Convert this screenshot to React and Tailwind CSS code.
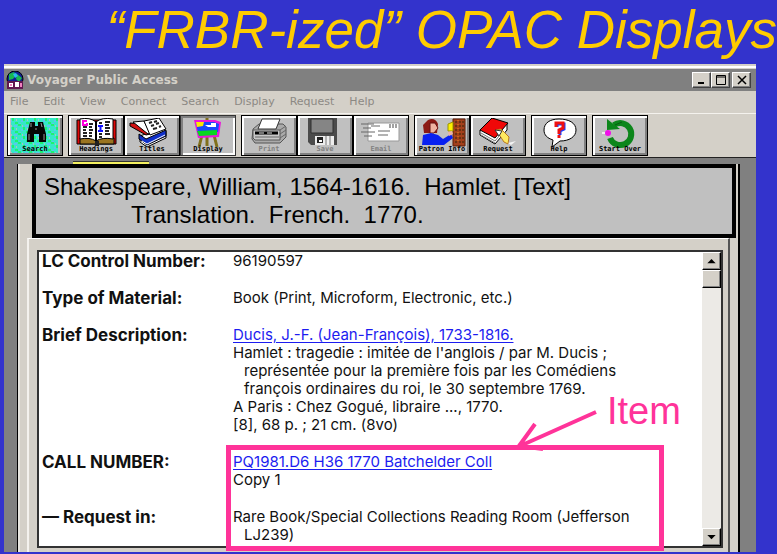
import React from "react";

const svgProps = { viewBox: "3 3 50 35", className: "block h-[35px] w-[50px]", "aria-hidden": true };

const SearchIcon = () => (
  <svg {...svgProps}>
    <defs>
      <pattern id="speckle" width="11" height="9" patternUnits="userSpaceOnUse">
        <rect width="11" height="9" fill="#35e8c8" />
        <path d="M0 0h3v2H0zM5 3h2v3H5zM8 7h3v2H8z" fill="#20f070" />
        <path d="M3 5h2v2H3zM7 1h3v2H7zM1 8h2v1H1z" fill="#5cc4f0" />
        <path d="M4 1h1v2H4zM9 4h1v2H9z" fill="#a8c8b8" />
      </pattern>
    </defs>
    <rect x="4" y="3" width="47" height="35" fill="url(#speckle)" />
    <path d="M23 7h5v4h3V7h5l3 12v8h-7v-8h-5v8h-7v-8z" fill="#050505" />
    <path d="M24 8v4M34 8l1 4M22 19v6M37 19v6M28 14h2" stroke="#999" strokeWidth="1" fill="none" />
  </svg>
);

const HeadingsIcon = () => (
  <svg {...svgProps}>
    <path d="M9 5h39v24H9z" fill="#e00808" stroke="#000" />
    <path d="M12 23h34v6H12z" fill="#9a7420" stroke="#000" />
    <path d="M12 4q10-2 16 3q6-5 17-3v20q-11-2-17 2q-6-4-16-2z" fill="#fff" stroke="#000" />
    <path d="M28 6v20" stroke="#000" strokeWidth="2" />
    <path d="M15 12h4M21 9h4M15 15h3M21 12h3M15 18h4M21 15h4M15 21h4M21 18h3M21 21h3M31 8h3M37 7h5M37 10h4M31 19h3M37 13h5M37 16h4M37 19h5M31 22h3" stroke="#222" strokeWidth="2" />
    <path d="M19 6h-4v4h4V8" stroke="#f0d" strokeWidth="2" fill="none" />
    <path d="M30 11h5M32.500 11v5M30 16h5" stroke="#11f" strokeWidth="2" />
    <path d="M27 26h4v5h-4z" fill="#222" />
  </svg>
);

const TitlesIcon = () => (
  <svg {...svgProps}>
    <path d="M16 21l22-8 4 3v7l-19 9-7-5z" fill="#fff" stroke="#000" />
    <path d="M15 19l7 5 20-9v6l-19 9-8-6z" fill="#1030c8" stroke="#000" />
    <path d="M18 26l5 3 18-9" stroke="#fff" fill="none" />
    <path d="M6 8l13 1 7 10-4 1L6 11z" fill="#d01010" stroke="#000" />
    <path d="M9 7l11-1 6 12-2 1z" fill="#fff" stroke="#000" />
    <path d="M20 6l15-3 7 11-16 6z" fill="#fff" stroke="#000" />
    <path d="M25 8l3-1M30 7l3-1M27 11l3-1M32 9l3-1M29 14l4-1M35 12l2-1" stroke="#222" strokeWidth="2" />
  </svg>
);

const DisplayIcon = () => (
  <svg {...svgProps}>
    <path d="M27 3v28M22 20l-3 12M34 20l3 12" stroke="#80701c" strokeWidth="3" />
    <path d="M14 5h21l6 2-2 15-21 1z" fill="#e818d8" />
    <path d="M16 7h18l5 2-1 8-20 1z" fill="#1848ff" />
    <path d="M16 7h8l-1 4-6 1z" fill="#ffe500" />
    <path d="M25 10h6v-2h5v4h-8z" fill="#fff" />
    <path d="M17 16l20-1v5l-18 1z" fill="#08d820" />
  </svg>
);

const PrintIcon = () => (
  <svg {...svgProps}>
    <path d="M12 14l6-5h24l3 3v10l-6 6H14l-3-4z" fill="#aaa" stroke="#555" />
    <path d="M21 4h18l-4 10H17z" fill="#fff" stroke="#333" />
    <path d="M12 15h27v10H14l-2-2z" fill="#c8c8c8" stroke="#555" />
    <path d="M14 18h23" stroke="#000" strokeWidth="3" />
    <path d="M18 18h5M26 18h5" stroke="#e8e8e8" />
    <path d="M14 22h24M39 15l6-4M39 19l6-4M39 23l6-4" stroke="#666" />
  </svg>
);

const SaveIcon = () => (
  <svg {...svgProps}>
    <path d="M11 3h29v27H14l-3-3z" fill="#4b4b4b" />
    <path d="M14 4h22v14H14z" fill="#858585" stroke="#303030" />
    <path d="M18 21h19v9H18z" fill="#eee" />
    <path d="M20 22h6v6h-6z" fill="#222" />
    <path d="M22 25h3v2h-3z" fill="#fff" />
    <path d="M29 21v9M33 21v9" stroke="#777" />
  </svg>
);

const EmailIcon = () => (
  <svg {...svgProps}>
    <path d="M15 8h31v18H15z" fill="#fff" stroke="#999" />
    <path d="M8 9h13M10 13h8M8 17h14M11 21h8M18 11h9M25 16h12M25 20h10" stroke="#666" />
    <path d="M36 10h8M36 12h8" stroke="#444" strokeDasharray="2 1" />
  </svg>
);

const PatronIcon = () => (
  <svg {...svgProps}>
    <path d="M39 4h12v27H39z" fill="#a3401b" stroke="#5c1c08" />
    <path d="M42 6v22M46 6v22M49 6v22" stroke="#30240b" strokeDasharray="2 2" />
    <path d="M44 5v24" stroke="#e89022" strokeDasharray="1 3" />
    <path d="M14 5q7-3 10 4l-1 9H10l-1-8z" fill="#8b1a14" />
    <path d="M16 8h5l3 5-4 5h-4z" fill="#efb2a0" stroke="#611" />
    <path d="M9 20l8-2 7 2 5 4 8-5 2 4-9 7H8z" fill="#0820f0" />
    <path d="M34 9l5-2v9h-5z" fill="#fff000" stroke="#999500" />
    <path d="M34 17l4-1 1 3-4 2z" fill="#efb2a0" />
  </svg>
);

const RequestIcon = () => (
  <svg {...svgProps}>
    <path d="M10 15v5l15 9 12-14v-6z" fill="#fff" stroke="#000" />
    <path d="M10 15L22 3l16 5-13 15z" fill="#f00808" stroke="#000" />
    <path d="M11 18l14 8 8-10M11 20l14 8" stroke="#777" fill="none" />
    <path d="M26 15l5-1 8 8-1 7-4-2z" fill="#ffea60" stroke="#b87820" />
    <path d="M25 15l7 1-3 5z" fill="#fff" stroke="#333" />
    <path d="M38 28l8-2-5 4z" fill="#f4f4f4" />
  </svg>
);

const HelpIcon = () => (
  <svg {...svgProps}>
    <path d="M28 4c10 0 17 4 17 11s-7 11-16 11l-8 6 1-7c-6-2-9-5-9-10C13 8 19 4 28 4z" fill="#fff" stroke="#000" />
    <path d="M26 12V9h7v5l-4 2v4" stroke="#1a3cff" strokeWidth="3" fill="none" />
    <path d="M25 12V8h7v5l-4 2v4M28 20v3" stroke="#f01010" strokeWidth="3" fill="none" />
  </svg>
);

const StartOverIcon = () => (
  <svg {...svgProps}>
    <path d="M22 10a11 11 0 1 1-4 13" stroke="#0c861c" strokeWidth="6" fill="none" />
    <path d="M15 4v11l13-1z" fill="#0c861c" />
    <path d="M23 10l7-3" stroke="#075d12" />
    <circle cx="16" cy="18" r="3" fill="#f010e8" />
    <path d="M10 18h3" stroke="#eee" strokeWidth="2" />
  </svg>
);

const groups = [
  [["Search", SearchIcon]],
  [["Headings", HeadingsIcon], ["Titles", TitlesIcon], ["Display", DisplayIcon]],
  [["Print", PrintIcon], ["Save", SaveIcon], ["Email", EmailIcon]],
  [["Patron Info", PatronIcon], ["Request", RequestIcon]],
  [["Help", HelpIcon]],
  [["Start Over", StartOverIcon]],
];
const unavailable = ["Print", "Save", "Email"];

function ToolButton({ name, Icon }) {
  const disabled = unavailable.includes(name);
  const pressed = name === "Display";
  return (
    <button
      type="button"
      disabled={disabled}
      aria-pressed={pressed}
      className={`relative flex h-[41px] w-14 items-center justify-center border bg-[#c0c0c0] ${
        pressed
          ? "border-[#333] shadow-[inset_2px_2px_0_#808080,inset_-2px_-2px_0_#fff]"
          : "border-black shadow-[inset_2px_2px_0_#fff,inset_-2px_-2px_0_#808080]"
      }`}
    >
      <Icon />
      <span
        className={`absolute inset-x-0 bottom-px whitespace-nowrap text-center font-['DejaVu_Sans_Mono',monospace] text-[7px] leading-[9px] font-bold ${
          disabled ? "text-[#808080]" : "text-black"
        }`}
      >
        {name}
      </span>
    </button>
  );
}

function WindowButton({ label, children }) {
  return (
    <button
      type="button"
      aria-label={label}
      className="flex h-4 w-[19px] items-center justify-center border border-t-white border-l-white border-r-[#404040] border-b-[#404040] bg-[#d4d0c8] shadow-[inset_-1px_-1px_0_#808080]"
    >
      <svg viewBox="0 0 12 12" className="size-3" fill="none" stroke="#000" aria-hidden>
        {children}
      </svg>
    </button>
  );
}

function ScrollButton({ label, d }) {
  return (
    <button
      type="button"
      aria-label={label}
      className="flex h-[18px] w-full items-center justify-center border border-t-white border-l-white border-r-black border-b-black bg-[#d4d0c8] shadow-[inset_-1px_-1px_0_#808080]"
    >
      <svg viewBox="0 0 10 6" className="h-[5px] w-[9px]" aria-hidden>
        <path d={d} />
      </svg>
    </button>
  );
}

function Row({ label, children }) {
  return (
    <div className="grid grid-cols-[191px_1fr]">
      <dt className="text-[17px] font-bold">{label}</dt>
      <dd>{children}</dd>
    </div>
  );
}

const linkClass = "text-[#1c1cf0] underline underline-offset-2";
const menus = ["File", "Edit", "View", "Connect", "Search", "Display", "Request", "Help"];

export default function App() {
  return (
    <div className="flex min-h-screen flex-col overflow-hidden bg-[#3333cc] font-['Liberation_Sans',Arial,sans-serif] text-black">
      <h1 className="h-16 whitespace-nowrap pt-px text-right text-[53px] leading-[58px] text-[#ffcc00] italic">
        “FRBR-ized” OPAC Displays
      </h1>

      <main className="relative mr-[21px] mb-[2px] ml-1 flex flex-1 flex-col bg-[#808080]">
        <header className="bg-[#d4d0c8]">
          <div className="border-t-2 border-[#d4d0c8]">
            <div className="border-t-2 border-white pt-px">
              <div className="flex h-[22px] items-center bg-[#808080] pr-[5px] pl-[2px]">
                <svg viewBox="0 0 18 18" className="size-[18px]" aria-hidden>
                  <circle cx="9" cy="8" r="8" fill="#102090" stroke="#000" />
                  <path d="M3 3l5-2 2 3-3 4-4 1zM11 3l5 4-3 4-3-3z" fill="#18b850" />
                  <path d="M7 3l3-1 2 3-3 2z" fill="#2bb8f0" />
                  <path d="M1 10h16v8H1z" fill="#601850" />
                  <path d="M3 12h4v4H3zM9 11h4v5H9z" fill="#fff" />
                  <path d="M4 13h2v2H4zM14 12h2v4h-2z" fill="#f080c0" />
                </svg>
                <h2 className="ml-[3px] flex-1 font-['DejaVu_Sans',sans-serif] text-[12px] font-bold text-[#d4d0c8]">
                  Voyager Public Access
                </h2>
                <div className="flex">
                  <WindowButton label="Minimize"><path d="M2 9h6" strokeWidth="2" /></WindowButton>
                  <WindowButton label="Maximize"><path d="M1.500 1.500h9v9h-9zM1 3h10" /></WindowButton>
                  <span className="w-[2px]" />
                  <WindowButton label="Close"><path d="M2 2l8 8M10 2l-8 8" strokeWidth="1.500" /></WindowButton>
                </div>
              </div>
            </div>
          </div>
          <nav className="flex h-[22px] items-center gap-[15px] px-[6px] font-['DejaVu_Sans',sans-serif] text-[11px] text-[#8c8984]">
            {menus.map((menu) => (
              <button key={menu} type="button">{menu}</button>
            ))}
          </nav>
          <div className="flex h-[45px] gap-[5px] border-t border-b border-t-[#f4f2ee] border-b-[#222] px-[3px] pt-px">
            {groups.map((group) => (
              <div key={group[0][0]} className="flex">
                {group.map(([name, Icon]) => (
                  <ToolButton key={name} name={name} Icon={Icon} />
                ))}
              </div>
            ))}
          </div>
        </header>

        <div className="mr-4 ml-[13px] flex flex-1 flex-col pt-[3px]">
          <div className="ml-14 h-[4px] w-[76px] border-t border-t-[#333] bg-[#f4f060]" />
          <div className="-mt-px flex flex-1 flex-col border-r-2 border-l border-r-black border-l-black bg-[#d4d0c8] pl-[3px] shadow-[inset_2px_0_0_#e8e6e0]">
            <div className="mr-[2px] ml-[11px] border-4 border-black bg-[#c0c0c0] py-[5px] pl-[8px] text-[24px] leading-[28px]">
              <p className="whitespace-pre">Shakespeare, William, 1564-1616.  Hamlet. [Text]</p>
              <p className="pl-[87px] whitespace-pre">Translation.  French.  1770.</p>
            </div>
            <div className="mr-[8px] ml-[6px] flex flex-1 flex-col border-t border-r-2 border-l-2 border-t-white border-r-[#555] border-l-[#f4f2ee] pt-[11px] pr-[5px] pb-1 pl-[8px]">
              <div className="flex flex-1 border-2 border-[#333] bg-white">
                <dl className="flex flex-1 flex-col gap-[19px] pl-[3px] font-['Inter',sans-serif] text-[15px] leading-[18px] text-[#111]">
                  <Row label="LC Control Number:">96190597</Row>
                  <Row label="Type of Material:">Book (Print, Microform, Electronic, etc.)</Row>
                  <Row label="Brief Description:">
                    <a href="#author" className={linkClass}>Ducis, J.-F. (Jean-François), 1733-1816.</a>
                    <p>Hamlet : tragedie : imitée de l'anglois / par M. Ducis ;</p>
                    <p className="pl-[11px]">représentée pour la première fois par les Comédiens</p>
                    <p className="pl-[11px]">françois ordinaires du roi, le 30 septembre 1769.</p>
                    <p>A Paris : Chez Gogué, libraire ..., 1770.</p>
                    <p>[8], 68 p. ; 21 cm. (8vo)</p>
                  </Row>
                  <Row label="CALL NUMBER:">
                    <a href="#call-number" className={linkClass}>PQ1981.D6 H36 1770 Batchelder Coll</a>
                    <p>Copy 1</p>
                  </Row>
                  <Row label="— Request in:">
                    <p>Rare Book/Special Collections Reading Room (Jefferson</p>
                    <p className="pl-[11px]">LJ239)</p>
                  </Row>
                </dl>
                <div className="flex w-[19px] flex-col bg-[#eceae6]">
                  <ScrollButton label="Scroll up" d="M5 0l5 5H0z" />
                  <div className="h-[18px] border border-t-white border-l-white border-r-black border-b-black bg-[#d4d0c8] shadow-[inset_-1px_-1px_0_#808080]" />
                  <div className="flex-1" />
                  <ScrollButton label="Scroll down" d="M0 0h10L5 5z" />
                </div>
              </div>
            </div>
          </div>
        </div>

        <div className="pointer-events-none absolute top-[381px] left-[222px] z-20 h-[106px] w-[438px] border-[5px] border-[#ff3399]" />
        <svg viewBox="0 0 84 42" className="pointer-events-none absolute top-[345px] left-[511px] z-20 h-[42px] w-[84px]" fill="none" stroke="#ff3399" strokeWidth="4" aria-hidden>
          <path d="M81 3L5 37M20 15L4 37l24 3" />
        </svg>
        <p className="absolute top-[325px] left-[603px] z-20 text-[38px] leading-[44px] text-[#ff3399]">Item</p>
      </main>
    </div>
  );
}
